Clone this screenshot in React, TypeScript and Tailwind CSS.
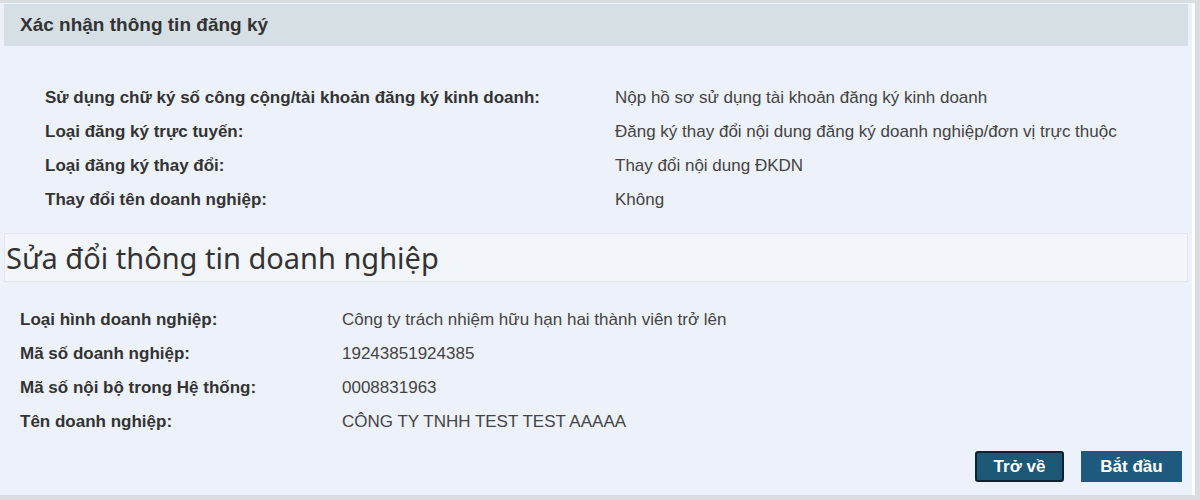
import { useState } from 'react'

const dangKyRows = [
  ['Sử dụng chữ ký số công cộng/tài khoản đăng ký kinh doanh:', 'Nộp hồ sơ sử dụng tài khoản đăng ký kinh doanh'],
  ['Loại đăng ký trực tuyến:', 'Đăng ký thay đổi nội dung đăng ký doanh nghiệp/đơn vị trực thuộc'],
  ['Loại đăng ký thay đổi:', 'Thay đổi nội dung ĐKDN'],
  ['Thay đổi tên doanh nghiệp:', 'Không'],
]

const doanhNghiepRows = [
  ['Loại hình doanh nghiệp:', 'Công ty trách nhiệm hữu hạn hai thành viên trở lên'],
  ['Mã số doanh nghiệp:', '19243851924385'],
  ['Mã số nội bộ trong Hệ thống:', '0008831963'],
  ['Tên doanh nghiệp:', 'CÔNG TY TNHH TEST TEST AAAAA'],
]

export default function App() {
  const [step, setStep] = useState<'confirm' | 'started'>('confirm')

  return (
    <div className="h-[500px] w-[1200px] bg-[#d9dde2] pt-[3px] pb-[5px] font-['Liberation_Sans',Arial,sans-serif]">
      <div className="flex h-full flex-col bg-[#edf1f9] mr-[5px] border-r-[3px] border-white">

        {/* tiêu đề */}
        <div className="mx-[4px] mt-[1px] flex h-[42px] items-center bg-[#d6dfe4] px-4">
          <h2 className="text-[19px] font-bold text-[#333]">Xác nhận thông tin đăng ký</h2>
        </div>

        {/* thông tin đăng ký */}
        <div className="flex flex-col gap-[15px] pl-[45px] pt-[42px]">
          {dangKyRows.map(([label, value]) => (
            <div key={label} className="flex h-[19px] items-center text-[17px] text-[#333]">
              <span className="w-[570px] font-bold">{label}</span>
              <span className="text-[#444]">{value}</span>
            </div>
          ))}
        </div>

        {/* sửa đổi */}
        <div className="mx-[4px] mt-[24px] flex h-[49px] items-center border border-[#e2e6ec] bg-[#f2f5fa] px-[1px]">
          <h1 className="font-['Noto_Sans',sans-serif] text-[29px] text-[#333]">Sửa đổi thông tin doanh nghiệp</h1>
        </div>

        <div className="flex flex-col gap-[15px] pl-[20px] pt-[28px]">
          {doanhNghiepRows.map(([label, value]) => (
            <div key={label} className="flex h-[19px] items-center text-[17px] text-[#333]">
              <span className="w-[322px] font-bold">{label}</span>
              <span className="text-[#444]">{value}</span>
            </div>
          ))}
        </div>

        <div className="mt-auto flex justify-end gap-[17px] pb-[13px] pr-[10px]">
          <button
            onClick={() => setStep('confirm')}
            className="h-[31px] w-[89px] rounded-[3px] border-2 border-[#10222c] bg-[#1d5877] text-[17px] font-bold text-white"
          >
            Trở về
          </button>
          <button
            onClick={() => setStep('started')}
            className="h-[31px] w-[101px] bg-[#1e5a7e] text-[17px] font-bold text-white"
          >
            {step === 'started' ? 'Bắt đầu' : 'Bắt đầu'}
          </button>
        </div>
      </div>
    </div>
  )
}
